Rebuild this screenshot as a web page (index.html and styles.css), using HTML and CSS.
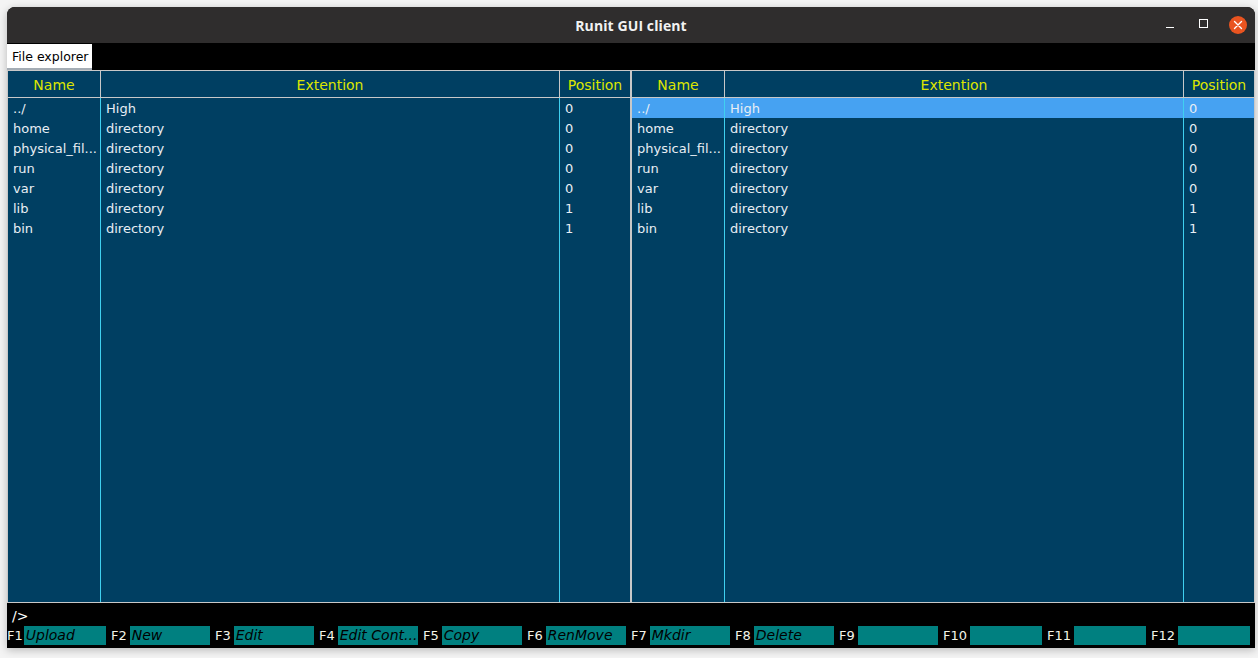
FILE: index.html
```html
<!DOCTYPE html>
<html>
<head>
<meta charset="utf-8">
<title>Runit GUI client</title>
<link rel="stylesheet" href="styles.css">
</head>
<body>
<div class="window">
  <div class="titlebar">
    <div class="title">Runit GUI client</div>
    <div class="controls">
      <span class="ctl min"></span>
      <span class="ctl max"></span>
      <span class="ctl close">
        <svg width="18" height="18" viewBox="0 0 18 18"><path d="M5.5 5.5 L12.5 12.5 M12.5 5.5 L5.5 12.5" stroke="#fff" stroke-width="1.4" stroke-linecap="round"/></svg>
      </span>
    </div>
  </div>
  <div class="menubar"><div class="tab">File explorer</div></div>
  <div class="panels">
    <div class="panel">
      <div class="col c-name">
        <div class="hd">Name</div>
        <div class="bd">
          <div class="cell">../</div><div class="cell">home</div><div class="cell">physical_fil...</div><div class="cell">run</div><div class="cell">var</div><div class="cell">lib</div><div class="cell">bin</div>
        </div>
      </div>
      <div class="col c-ext">
        <div class="hd">Extention</div>
        <div class="bd">
          <div class="cell">High</div><div class="cell">directory</div><div class="cell">directory</div><div class="cell">directory</div><div class="cell">directory</div><div class="cell">directory</div><div class="cell">directory</div>
        </div>
      </div>
      <div class="col c-pos">
        <div class="hd">Position</div>
        <div class="bd">
          <div class="cell">0</div><div class="cell">0</div><div class="cell">0</div><div class="cell">0</div><div class="cell">0</div><div class="cell">1</div><div class="cell">1</div>
        </div>
      </div>
    </div>
    <div class="panel">
      <div class="col c-name">
        <div class="hd">Name</div>
        <div class="bd">
          <div class="cell sel">../</div><div class="cell">home</div><div class="cell">physical_fil...</div><div class="cell">run</div><div class="cell">var</div><div class="cell">lib</div><div class="cell">bin</div>
        </div>
      </div>
      <div class="col c-ext">
        <div class="hd">Extention</div>
        <div class="bd">
          <div class="cell sel">High</div><div class="cell">directory</div><div class="cell">directory</div><div class="cell">directory</div><div class="cell">directory</div><div class="cell">directory</div><div class="cell">directory</div>
        </div>
      </div>
      <div class="col c-pos">
        <div class="hd">Position</div>
        <div class="bd">
          <div class="cell sel">0</div><div class="cell">0</div><div class="cell">0</div><div class="cell">0</div><div class="cell">0</div><div class="cell">1</div><div class="cell">1</div>
        </div>
      </div>
    </div>
  </div>
  <div class="footer">
    <div class="prompt">/&gt;</div>
    <div class="fkeys">
      <div class="fk"><span class="lbl">F1</span><span class="box">Upload</span></div>
      <div class="fk"><span class="lbl">F2</span><span class="box">New</span></div>
      <div class="fk"><span class="lbl">F3</span><span class="box">Edit</span></div>
      <div class="fk"><span class="lbl">F4</span><span class="box">Edit Cont...</span></div>
      <div class="fk"><span class="lbl">F5</span><span class="box">Copy</span></div>
      <div class="fk"><span class="lbl">F6</span><span class="box">RenMove</span></div>
      <div class="fk"><span class="lbl">F7</span><span class="box">Mkdir</span></div>
      <div class="fk"><span class="lbl">F8</span><span class="box">Delete</span></div>
      <div class="fk"><span class="lbl">F9</span><span class="box"></span></div>
      <div class="fk"><span class="lbl">F10</span><span class="box"></span></div>
      <div class="fk"><span class="lbl">F11</span><span class="box"></span></div>
      <div class="fk"><span class="lbl">F12</span><span class="box"></span></div>
    </div>
  </div>
</div>
</body>
</html>
```

FILE: styles.css
```css
html, body {
  margin: 0;
  padding: 0;
  background: #f4f4f4;
  width: 1258px;
  height: 658px;
  overflow: hidden;
}
body {
  padding: 7px 0 0 7px;
  box-sizing: border-box;
  font-family: "DejaVu Sans", sans-serif;
}
.window {
  width: 1248px;
  height: 641px;
  background: #000;
  border-radius: 8px 8px 0 0;
  overflow: hidden;
  display: flex;
  flex-direction: column;
  box-shadow: 0 2px 8px rgba(0,0,0,0.25);
}
.titlebar {
  height: 36px;
  background: #2f2d2d;
  position: relative;
  display: flex;
  align-items: center;
  justify-content: center;
  flex-shrink: 0;
}
.title {
  color: #f2f2f2;
  font-family: "Open Sans", "Noto Sans", sans-serif;
  font-weight: 700;
  font-size: 14px;
  letter-spacing: 0.1px;
}
.controls {
  position: absolute;
  right: 8px;
  top: 9px;
  display: flex;
  align-items: center;
}
.ctl {
  width: 18px;
  height: 18px;
  display: block;
  position: relative;
  margin-left: 16px;
}
.ctl.min::after {
  content: "";
  position: absolute;
  left: 5px;
  top: 11px;
  width: 8px;
  height: 1px;
  background: #fff;
}
.ctl.max::after {
  content: "";
  position: absolute;
  left: 4px;
  top: 3px;
  width: 7px;
  height: 7px;
  border: 1px solid #fff;
}
.ctl.close {
  border-radius: 50%;
  background: #e95420;
}
.ctl.close svg { display: block; }
.menubar {
  height: 27px;
  background: #000;
  flex-shrink: 0;
  display: flex;
  align-items: flex-start;
}
.tab {
  background: #fff;
  color: #000;
  font-size: 12.5px;
  height: 24px;
  line-height: 26px;
  padding: 0 3px 0 5px;
  border-bottom: 2px solid #a4acb4;
  margin-top: 1px;
}
.panels {
  height: 533px;
  display: flex;
  flex-shrink: 0;
}
.panel {
  flex: 1;
  display: flex;
  border: 1px solid #c8c8c8;
  background: #003f62;
}
.col {
  display: flex;
  flex-direction: column;
}
.c-name { width: 93px; }
.c-ext { flex: 1; }
.c-pos { width: 70px; }
.hd {
  height: 26px;
  line-height: 28px;
  text-align: center;
  color: #dde600;
  font-size: 14px;
  border-bottom: 1px solid #c8c8c8;
  border-right: 1px solid #c8c8c8;
  white-space: nowrap;
  overflow: hidden;
}
.bd {
  flex: 1;
  border-right: 1px solid #3fd0f0;
}
.c-pos .hd, .c-pos .bd { border-right: none; }
.cell {
  height: 20px;
  line-height: 21px;
  color: #e8eef4;
  font-size: 13px;
  padding-left: 5px;
  white-space: nowrap;
}
.cell.sel { background: #46a2f2; }
.footer {
  flex: 1;
  background: #000;
  display: flex;
  flex-direction: column;
}
.prompt {
  color: #fff;
  font-size: 14px;
  height: 23px;
  line-height: 26px;
  padding-left: 5px;
}
.fkeys {
  display: flex;
  height: 19px;
}
.fk {
  flex: 1;
  display: flex;
  padding-right: 5px;
}
.lbl {
  color: #f4f4e8;
  font-size: 13px;
  line-height: 20px;
  padding-right: 1px;
}
.fk:not(:first-child) .lbl { padding-right: 3px; }
.box {
  flex: 1;
  background: #008080;
  color: #000;
  font-style: italic;
  font-size: 14px;
  line-height: 19px;
  padding-left: 2px;
  white-space: nowrap;
  overflow: hidden;
}
```
